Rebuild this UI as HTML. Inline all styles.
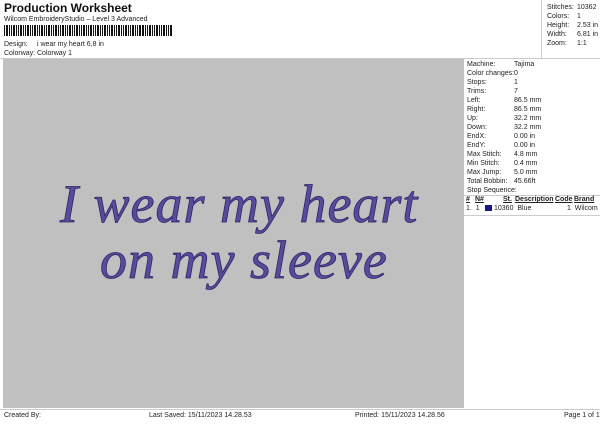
<!DOCTYPE html><html><head><style>
body{margin:0;width:600px;height:424px;background:#fff;font-family:"Liberation Sans",sans-serif;font-size:7px;color:#222;position:relative;overflow:hidden}
.a{position:absolute;white-space:nowrap}
.bc{position:absolute;left:4px;top:25px;height:11px;width:166px;background:repeating-linear-gradient(90deg,#111 0 1px,#fff 1px 2px,#111 2px 4px,#fff 4px 5px,#111 5px 6px,#fff 6px 7px)}
.g{position:absolute;left:3px;top:59px;width:461px;height:349px;background:#c0c0c0}
.sc{position:absolute;font-family:"Liberation Serif",serif;font-style:italic;font-size:54px;line-height:60px;color:#5a4a9c;-webkit-text-stroke:0.8px #2e2466;white-space:nowrap;letter-spacing:1px}
</style></head><body>
<div class="a" style="left:4px;top:1px;font-size:12px;font-weight:bold;color:#111">Production Worksheet</div>
<div class="a" style="left:4px;top:16px">Wilcom EmbroideryStudio – Level 3 Advanced</div>
<div class="bc"></div><div class="bc" style="left:140px;width:33px"></div>
<div class="a" style="left:4px;top:41px">Design:</div><div class="a" style="left:37px;top:41px">i wear my heart 6,8 in</div>
<div class="a" style="left:4px;top:50px">Colorway:</div><div class="a" style="left:37px;top:50px">Colorway 1</div>
<div style="position:absolute;left:0;top:58px;width:600px;height:1px;background:#ccc"></div>
<div style="position:absolute;left:541px;top:0;width:1px;height:58px;background:#ccc"></div>
<div class="a" style="left:547px;top:3px;line-height:9px">Stitches:<br>Colors:<br>Height:<br>Width:<br>Zoom:</div>
<div class="a" style="left:577px;top:3px;line-height:9px">10362<br>1<br>2.53 in<br>6.81 in<br>1:1</div>
<div class="g"></div>
<div class="sc" style="left:60px;top:174px">I wear my heart</div>
<div class="sc" style="left:100px;top:230px">on my sleeve</div>
<div class="a" style="left:467px;top:60px;line-height:9px">Machine:<br>Color changes:<br>Stops:<br>Trims:<br>Left:<br>Right:<br>Up:<br>Down:<br>EndX:<br>EndY:<br>Max Stitch:<br>Min Stitch:<br>Max Jump:<br>Total Bobbin:<br>Stop Sequence:</div>
<div class="a" style="left:514px;top:60px;line-height:9px">Tajima<br>0<br>1<br>7<br>86.5 mm<br>86.5 mm<br>32.2 mm<br>32.2 mm<br>0.00 in<br>0.00 in<br>4.8 mm<br>0.4 mm<br>5.0 mm<br>45.66ft</div>
<div style="position:absolute;left:464px;top:195px;width:136px;height:1px;background:#ccc"></div>
<div class="a" style="left:466px;top:196px;font-weight:bold;text-decoration:underline">#</div>
<div class="a" style="left:475px;top:196px;font-weight:bold;text-decoration:underline">N#</div>
<div class="a" style="left:503px;top:196px;font-weight:bold;text-decoration:underline">St.</div>
<div class="a" style="left:515px;top:196px;font-weight:bold;text-decoration:underline">Description</div>
<div class="a" style="left:555px;top:196px;font-weight:bold;text-decoration:underline">Code</div>
<div class="a" style="left:574px;top:196px;font-weight:bold;text-decoration:underline">Brand</div>
<div class="a" style="left:466px;top:205px">1.&nbsp; 1</div>
<div style="position:absolute;left:485px;top:205px;width:7px;height:6px;background:#1a1680"></div>
<div class="a" style="left:494px;top:205px">10360&nbsp; Blue</div>
<div class="a" style="left:567px;top:205px">1&nbsp; Wilcom</div>
<div style="position:absolute;left:464px;top:215px;width:136px;height:1px;background:#ccc"></div>
<div style="position:absolute;left:0;top:409px;width:600px;height:1px;background:#ccc"></div>
<div class="a" style="left:4px;top:412px">Created By:</div>
<div class="a" style="left:149px;top:412px">Last Saved: 15/11/2023 14.28.53</div>
<div class="a" style="left:355px;top:412px">Printed: 15/11/2023 14.28.56</div>
<div class="a" style="left:564px;top:412px">Page 1 of 1</div>
</body></html>
